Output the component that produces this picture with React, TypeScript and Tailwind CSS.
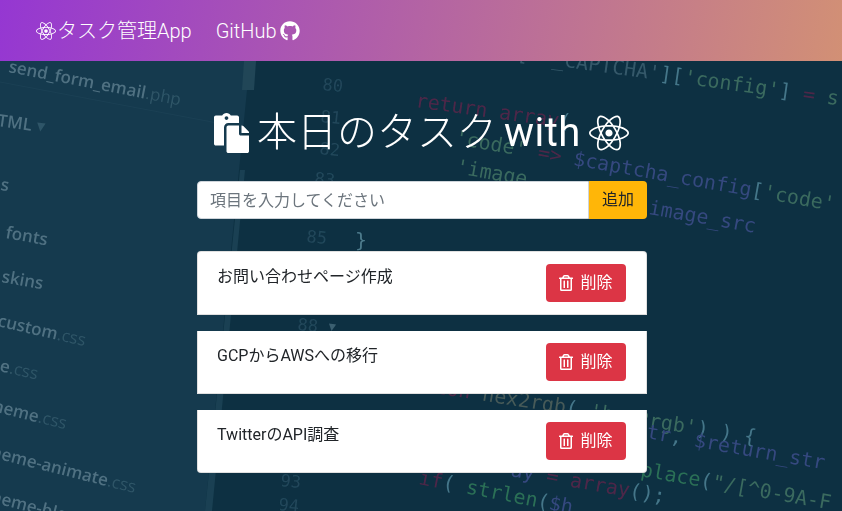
import type { ReactElement } from "react";
import { FaGithub, FaPaste, FaReact, FaRegTrashAlt } from "react-icons/fa";

const TASKS = ["お問い合わせページ作成", "GCPからAWSへの移行", "TwitterのAPI調査"];

const GREEN = "#3a6a5e";
const BLUE = "#35487f";
const MAROON = "#4e2848";
const STEEL = "#447689";

const FILES = [
	{ name: "send_form_email", ext: ".php", x: 8, y: 72, r: 11 },
	{ name: "TML", ext: " ▾", x: -3, y: 126, r: 8 },
	{ name: "s", ext: "", x: 0, y: 190, r: 9 },
	{ name: "fonts", ext: "", x: 5, y: 238, r: 10 },
	{ name: "skins", ext: "", x: 1, y: 282, r: 10 },
	{ name: "custom", ext: ".css", x: -3, y: 326, r: 13 },
	{ name: "e", ext: ".css", x: -1, y: 371, r: 13 },
	{ name: "heme", ext: ".css", x: -8, y: 411, r: 14 },
	{ name: "heme-animate", ext: ".css", x: -10, y: 457, r: 14 },
	{ name: "heme-blog", ext: ".css", x: -10, y: 502, r: 14 },
];

const LINE_NUMBERS = [
	{ n: "80", x: 322, y: 90 },
	{ n: "81", x: 320, y: 122 },
	{ n: "82", x: 319, y: 154 },
	{ n: "83", x: 314, y: 184 },
	{ n: "85", x: 306, y: 242 },
	{ n: "88", x: 297, y: 330 },
	{ n: "93", x: 280, y: 486 },
	{ n: "94", x: 278, y: 510 },
];

function CodeBackdrop(): ReactElement {
	return (
		<svg className="absolute inset-0 h-full w-full" viewBox="0 0 842 511" aria-hidden="true">
			<defs>
				<filter id="soft">
					<feGaussianBlur stdDeviation="0.7" />
				</filter>
			</defs>
			<rect width="842" height="511" fill="#0d3042" />
			<polygon points="0,0 256,0 205,511 0,511" fill="#153a4e" />
			<polygon points="240,170 245,170 212,511 205,511" fill="#1a4053" />
			<polygon points="244,61 256,61 254,90 242,90" fill="#214657" />
			<line x1="0" y1="82" x2="244" y2="128" stroke="#1b4054" />
			<g filter="url(#soft)" fontFamily="'DejaVu Sans Mono', monospace" fontSize="17">
				{FILES.map((f) => (
					<text
						key={f.name}
						x={f.x}
						y={f.y}
						fontFamily="'Open Sans', sans-serif"
						fontWeight="600"
						transform={`rotate(${f.r} ${f.x} ${f.y})`}
						fill="#507182"
					>
						{f.name}
						<tspan fill="#2f5567" fontWeight="400">{f.ext}</tspan>
					</text>
				))}
				{LINE_NUMBERS.map((l) => (
					<text key={l.n} x={l.x} y={l.y} fill="#21475a" transform={`rotate(6 ${l.x} ${l.y})`}>
						{l.n}
					</text>
				))}
				<text x="516" y="60" transform="rotate(8 516 60)" fontSize="20">
					<tspan fill="#35596a">[ '_CAPTCHA'</tspan>
					<tspan fill={STEEL}>][</tspan>
					<tspan fill={GREEN}>'config'</tspan>
					<tspan fill={STEEL}>]</tspan>
					<tspan fill={MAROON}> = </tspan>
					<tspan fill={GREEN}>s</tspan>
				</text>
				<text x="415" y="107" transform="rotate(8 415 107)" fontSize="20">
					<tspan fill={MAROON}>return array</tspan>
					<tspan fill={STEEL}>(</tspan>
				</text>
				<text x="454" y="144" transform="rotate(10 454 144)" fontSize="20">
					<tspan fill={GREEN}>'code'</tspan>
					<tspan fill={MAROON}> =&gt; </tspan>
					<tspan fill={BLUE}>$captcha_config</tspan>
					<tspan fill={STEEL}>[</tspan>
					<tspan fill={GREEN}>'code'</tspan>
				</text>
				<text x="455" y="173" transform="rotate(10 455 173)" fontSize="20" fill={GREEN}>
					'image_
				</text>
				<text x="648" y="214" transform="rotate(10 648 214)" fontSize="20" fill={BLUE}>
					image_src
				</text>
				<text x="355" y="247" fontSize="20" fill="#4d7b8c">
					{"}"}
				</text>
				<text x="328" y="330" transform="rotate(8 328 330)" fontSize="12" fill="#3a5f70">
					▼
				</text>
				<text x="434" y="393" transform="rotate(9 434 393)" fontSize="20">
					<tspan fill={MAROON}>ion </tspan>
					<tspan fill="#465a58">hex2rgb</tspan>
					<tspan fill={STEEL}>( </tspan>
					<tspan fill={GREEN}>'hex2rgb'</tspan>
					<tspan fill={STEEL}>) ) {"{"}</tspan>
				</text>
				<text x="634" y="436" transform="rotate(10 634 436)" fontSize="20">
					<tspan fill={BLUE}>str</tspan>
					<tspan fill={STEEL}>, </tspan>
					<tspan fill={BLUE}>$return_str</tspan>
				</text>
				<text x="640" y="476" transform="rotate(10 640 476)" fontSize="20">
					<tspan fill="#2c7056">place</tspan>
					<tspan fill={STEEL}>(</tspan>
					<tspan fill={GREEN}>"/[^0-9A-F</tspan>
				</text>
				<text x="510" y="476" transform="rotate(10 510 476)" fontSize="20">
					<tspan fill={BLUE}>ay</tspan>
					<tspan fill={MAROON}> = array</tspan>
					<tspan fill={STEEL}>();</tspan>
				</text>
				<text x="418" y="484" transform="rotate(11 418 484)" fontSize="20">
					<tspan fill={MAROON}>if</tspan>
					<tspan fill={STEEL}>( </tspan>
					<tspan fill="#2c7056">strlen</tspan>
					<tspan fill={STEEL}>(</tspan>
					<tspan fill={BLUE}>$h</tspan>
				</text>
			</g>
		</svg>
	);
}

export default function App(): ReactElement {
	return (
		<div className="relative h-[511px] w-[842px] overflow-hidden font-['Roboto','Noto_Sans_CJK_JP',sans-serif] text-[#212529]">
			<CodeBackdrop />
			<nav className="relative flex h-[61px] items-center gap-6 bg-[linear-gradient(100deg,#9537d2,#d29075)] pl-9 text-xl font-light text-white">
				<a className="flex items-center">
					<FaReact className="h-5 w-5" />
					<span className="ml-px">タスク管理App</span>
				</a>
				<a className="flex items-center gap-[3px]">
					GitHub
					<FaGithub className="h-5 w-5" />
				</a>
			</nav>
			<main className="relative ml-[197px] flex w-[450px] flex-col">
				<h1 className="mt-[48px] flex h-[48px] items-center pl-[17px] text-[40px] font-light whitespace-nowrap text-white">
					<FaPaste className="h-10 w-[35px]" />
					<span className="ml-2">本日のタスク</span>
					<span className="ml-[7px] font-normal tracking-[0.5px]">with</span>
					<FaReact className="ml-2 h-10 w-10" />
				</h1>
				<form className="mt-6 flex h-[38px]">
					<input
						placeholder="項目を入力してください"
						className="h-full min-w-0 flex-1 rounded-l border border-[#ced4da] bg-white px-3 text-base outline-none placeholder:text-[#6c757d]"
					/>
					<button type="button" className="h-full w-[58px] rounded-r bg-[#ffb608] text-base">
						追加
					</button>
				</form>
				<ul className="mt-8 flex flex-col gap-4">
					{TASKS.map((task, i) => (
						<li
							key={task}
							className={`flex items-start justify-between border border-black/12 bg-white py-3 pr-5 pl-[19px] first:rounded-t last:rounded-b ${i > 0 ? "border-t-0" : ""}`}
						>
							<span className="mt-px text-base leading-6">{task}</span>
							<button type="button" className="flex h-[38px] w-20 items-center justify-center gap-[7px] rounded bg-[#dc3545] text-base text-white">
								<FaRegTrashAlt className="h-4 w-[14px]" />
								削除
							</button>
						</li>
					))}
				</ul>
			</main>
		</div>
	);
}
